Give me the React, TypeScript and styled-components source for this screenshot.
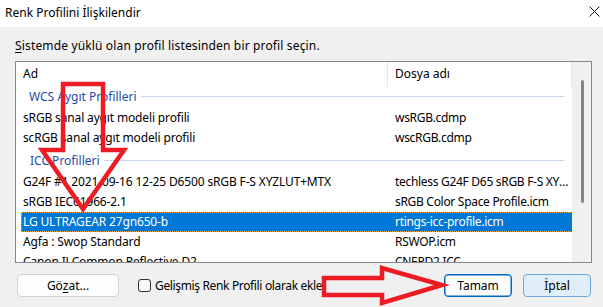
import React from 'react';
import styled, { createGlobalStyle } from 'styled-components';

const GlobalStyle = createGlobalStyle`
  html, body { margin: 0; padding: 0; background: #f0f0f0; overflow: hidden; }
  body { font-family: "Segoe UI", "Noto Sans", "DejaVu Sans", sans-serif; font-size: 12px; color: #000; }
  * { box-sizing: border-box; }
`;

const Dialog = styled.div`
  position: relative;
  width: 603px;
  height: 307px;
  background: #f0f0f0;
  display: flex;
  flex-direction: column;
  overflow: hidden;
`;

const TitleBar = styled.div`
  height: 27px;
  flex-shrink: 0;
  background: #ffffff;
  display: flex;
  align-items: center;
  justify-content: space-between;
  padding: 0 3px 0 5px;
`;

const Title = styled.span`
  font-size: 12px;
  line-height: 16px;
  margin-top: -2px;
`;

const CloseButton = styled.div`
  width: 12px;
  height: 12px;
  margin-top: -4px;
  display: flex;
  align-items: center;
  justify-content: center;
`;

const Body = styled.div`
  display: flex;
  flex-direction: column;
  padding: 0 11px 0 15px;
`;

const Prompt = styled.div`
  height: 16px;
  line-height: 16px;
  margin: 11px 0 7px 0;
  letter-spacing: 0.15px;
`;

const U = styled.span`
  text-decoration: underline;
  text-underline-offset: 2px;
`;

const ListBox = styled.div`
  height: 202px;
  border: 1px solid #828790;
  background: #ffffff;
  display: grid;
  grid-template-columns: 1fr 19px;
  overflow: hidden;
`;

const ListContent = styled.div`
  display: flex;
  flex-direction: column;
  overflow: hidden;
`;

const HeaderRow = styled.div`
  height: 25px;
  flex-shrink: 0;
  display: grid;
  grid-template-columns: 372px 1fr;
`;

const HeaderCell = styled.div`
  padding: 4px 0 0 7px;
  line-height: 16px;
  border-right: 1px solid #e5e5e5;
  white-space: nowrap;
`;

const Group = styled.div<{ $h: number; $pb: number; $pl: number }>`
  height: ${(p) => p.$h}px;
  flex-shrink: 0;
  padding: 0 8px ${(p) => p.$pb}px ${(p) => p.$pl}px;
  display: flex;
  align-items: center;
  color: #1f4bb0;
  white-space: nowrap;
  &::after {
    content: '';
    flex: 1;
    height: 1px;
    margin-left: 4px;
    background: #c6d4ec;
  }
`;

const Row = styled.div<{ $selected?: boolean }>`
  height: 20px;
  flex-shrink: 0;
  display: grid;
  grid-template-columns: ${(p) => (p.$selected ? '367px' : '372px')} 1fr;
  align-items: center;
  white-space: nowrap;
  letter-spacing: -0.15px;
  background: ${(p) => (p.$selected ? '#0078d7' : 'transparent')};
  color: ${(p) => (p.$selected ? '#ffffff' : '#000000')};
  outline: ${(p) => (p.$selected ? '1px dotted #f3b04a' : 'none')};
  outline-offset: -1px;
  margin-left: ${(p) => (p.$selected ? '5px' : '0')};
  margin-right: ${(p) => (p.$selected ? '-1px' : '0')};
`;

const Cell = styled.div<{ $shift?: boolean; $file?: boolean }>`
  padding-left: ${(p) => (p.$shift ? '2px' : '7px')};
  padding-right: ${(p) => (p.$file ? '1px' : '6px')};
  letter-spacing: ${(p) => (p.$file ? '-0.3px' : 'inherit')};
  overflow: hidden;
  text-overflow: ellipsis;
  line-height: 20px;
`;

const ScrollTrack = styled.div`
  background: #f0f0f0;
  display: flex;
  justify-content: center;
  padding: 18px 0 0 1px;
`;

const ScrollThumb = styled.div`
  width: 3px;
  height: 123px;
  border-radius: 2px;
  background: #868686;
`;

const Footer = styled.div`
  height: 23px;
  margin-top: 11px;
  display: flex;
  align-items: center;
  padding: 0 12px 0 17px;
`;

const Button = styled.div<{ $w: number; $variant?: 'default' | 'primary' | 'hover' }>`
  width: ${(p) => p.$w}px;
  height: 23px;
  display: flex;
  align-items: center;
  justify-content: center;
  border-radius: 4px;
  line-height: 16px;
  background: ${(p) => (p.$variant === 'hover' ? '#e0eef9' : '#fdfdfd')};
  border: 1px solid
    ${(p) =>
      p.$variant === 'primary' ? '#0067c0' : p.$variant === 'hover' ? '#6fa6dc' : '#d0d0d0'};
  box-shadow: ${(p) => (p.$variant === 'primary' ? 'inset 0 0 0 0.5px #0067c0' : 'none')};
`;

const CheckLabel = styled.label`
  display: flex;
  align-items: center;
  margin-left: 19px;
  gap: 4px;
  white-space: nowrap;
  letter-spacing: -0.35px;
`;

const CheckBox = styled.span`
  width: 13px;
  height: 13px;
  border: 1px solid #333333;
  border-radius: 3px;
  background: #f7f7f7;
`;

const Spacer = styled.div`
  flex: 1;
`;

const ButtonGroup = styled.div`
  display: flex;
  gap: 11px;
`;

const Overlay = styled.svg`
  position: absolute;
  left: 0;
  top: 0;
  pointer-events: none;
`;

const rows1 = [
  ['sRGB sanal aygıt modeli profili', 'wsRGB.cdmp'],
  ['scRGB sanal aygıt modeli profili', 'wscRGB.cdmp'],
];

const rows2: { name: string; file: string; selected?: boolean }[] = [
  { name: 'G24F #1 2021-09-16 12-25 D6500 sRGB F-S XYZLUT+MTX', file: 'techless G24F D65 sRGB F-S XYZLUT+MTX.icm' },
  { name: 'sRGB IEC61966-2.1', file: 'sRGB Color Space Profile.icm' },
  { name: 'LG ULTRAGEAR 27gn650-b', file: 'rtings-icc-profile.icm', selected: true },
  { name: 'Agfa : Swop Standard', file: 'RSWOP.icm' },
  { name: 'Canon IJ Common Reflective D2', file: 'CNEPD2.ICC' },
];

export default function App() {
  return (
    <Dialog>
      <GlobalStyle />
      <TitleBar>
        <Title>Renk Profilini İlişkilendir</Title>
        <CloseButton>
          <svg width="11" height="11" viewBox="0 0 11 11">
            <path d="M0.5 0.5 L10.5 10.5 M10.5 0.5 L0.5 10.5" stroke="#1a1a1a" strokeWidth="1" />
          </svg>
        </CloseButton>
      </TitleBar>
      <Body>
        <Prompt>
          <U>S</U>istemde yüklü olan profil listesinden bir profil seçin.
        </Prompt>
        <ListBox>
          <ListContent>
            <HeaderRow>
              <HeaderCell>Ad</HeaderCell>
              <HeaderCell>Dosya adı</HeaderCell>
            </HeaderRow>
            <Group $h={21} $pb={3} $pl={13}>WCS Aygıt Profilleri</Group>
            {rows1.map(([n, f]) => (
              <Row key={n}>
                <Cell>{n}</Cell>
                <Cell $file>{f}</Cell>
              </Row>
            ))}
            <Group $h={24} $pb={0} $pl={14}>ICC Profilleri</Group>
            {rows2.map((r) => (
              <Row key={r.name} $selected={r.selected}>
                <Cell $shift={r.selected}>{r.name}</Cell>
                <Cell $file>{r.file}</Cell>
              </Row>
            ))}
          </ListContent>
          <ScrollTrack>
            <ScrollThumb />
          </ScrollTrack>
        </ListBox>
      </Body>
      <Footer>
        <Button $w={102}>
          <span>
            Gö<U>z</U>at...
          </span>
        </Button>
        <CheckLabel>
          <CheckBox />
          <span>Gelişmiş Renk Profili olarak ekle</span>
        </CheckLabel>
        <Spacer />
        <ButtonGroup>
          <Button $w={68} $variant="primary">Tamam</Button>
          <Button $w={68} $variant="hover">İptal</Button>
        </ButtonGroup>
      </Footer>
      <Overlay width="603" height="307" viewBox="0 0 603 307">
        <polygon
          points="63,84 103,84 103,150 124,150 83,209 42,150 63,150"
          fill="none"
          stroke="#ed1c24"
          strokeWidth="4.5"
          strokeLinejoin="miter"
        />
        <polygon
          points="324,278 382,278 382,268 442,285 382,303 382,295 324,295"
          fill="none"
          stroke="#ed1c24"
          strokeWidth="4.5"
          strokeLinejoin="miter"
        />
      </Overlay>
    </Dialog>
  );
}
